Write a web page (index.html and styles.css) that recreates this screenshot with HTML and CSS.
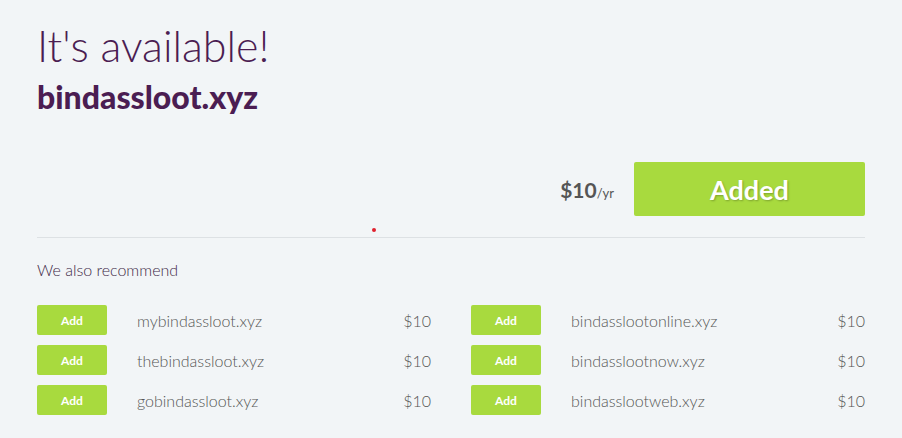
FILE: index.html
```html
<!DOCTYPE html>
<html>
<head>
    <title>Domain search</title>
    <link rel="stylesheet" href="styles.css">
</head>
<body>
    <div class="page">
        <h1 class="headline">It's available!</h1>
        <h2 class="domain">bindassloot.xyz</h2>

        <div class="buy-row">
            <span class="price">$10<small>/yr</small></span>
            <button class="btn-added">Added</button>
        </div>

        <div class="divider"><span class="dot"></span></div>

        <p class="rec-title">We also recommend</p>

        <div class="rec-grid">
            <div class="rec-item">
                <button class="btn-add">Add</button>
                <span class="rec-name">mybindassloot.xyz</span>
                <span class="rec-price">$10</span>
            </div>
            <div class="rec-item">
                <button class="btn-add">Add</button>
                <span class="rec-name">bindasslootonline.xyz</span>
                <span class="rec-price">$10</span>
            </div>
            <div class="rec-item">
                <button class="btn-add">Add</button>
                <span class="rec-name">thebindassloot.xyz</span>
                <span class="rec-price">$10</span>
            </div>
            <div class="rec-item">
                <button class="btn-add">Add</button>
                <span class="rec-name">bindasslootnow.xyz</span>
                <span class="rec-price">$10</span>
            </div>
            <div class="rec-item">
                <button class="btn-add">Add</button>
                <span class="rec-name">gobindassloot.xyz</span>
                <span class="rec-price">$10</span>
            </div>
            <div class="rec-item">
                <button class="btn-add">Add</button>
                <span class="rec-name">bindasslootweb.xyz</span>
                <span class="rec-price">$10</span>
            </div>
        </div>
    </div>
</body>
</html>
```

FILE: styles.css
```css
body {
    margin: 0;
    background: #f2f5f7;
    font-family: Lato, "Open Sans", sans-serif;
}
.page {
    width: 828px;
    padding: 20px 0 0 37px;
}
.headline {
    margin: 0;
    font-size: 43px;
    font-weight: 300;
    line-height: 52px;
    color: #4b1d52;
}
.domain {
    margin: 6px 0 0;
    font-size: 32px;
    font-weight: 900;
    line-height: 38px;
    color: #4b1d52;
}
.buy-row {
    display: flex;
    justify-content: flex-end;
    align-items: center;
    gap: 20px;
    margin-top: 46px;
}
.price {
    font-size: 21px;
    font-weight: 700;
    color: #555;
}
.price small {
    font-size: 13px;
    font-weight: 400;
}
.btn-added {
    width: 231px;
    height: 54px;
    border: none;
    border-radius: 2px;
    background: #a8da3e;
    color: #fff;
    font-family: Lato, sans-serif;
    font-size: 27px;
    font-weight: 700;
    text-shadow: 1px 1px 2px rgba(0,0,0,0.25);
}
.divider {
    position: relative;
    margin-top: 21px;
    height: 1px;
    background: #dde1e4;
}
.dot {
    position: absolute;
    left: 335px;
    top: -9px;
    width: 4px;
    height: 4px;
    border-radius: 50%;
    background: #e0202e;
}
.rec-title {
    margin: 22px 0 0;
    font-size: 16px;
    font-weight: 300;
    color: #3f2a47;
}
.rec-grid {
    display: grid;
    grid-template-columns: 394px 394px;
    column-gap: 40px;
    row-gap: 10px;
    margin-top: 26px;
}
.rec-item {
    display: flex;
    align-items: center;
    height: 30px;
}
.btn-add {
    width: 70px;
    height: 30px;
    border: none;
    border-radius: 2px;
    background: #a8da3e;
    color: #fff;
    font-family: Lato, sans-serif;
    font-size: 12px;
    font-weight: 700;
}
.rec-name {
    flex: 1;
    margin-left: 30px;
    font-size: 16px;
    font-weight: 300;
    color: #555;
}
.rec-price {
    font-size: 16px;
    font-weight: 300;
    color: #555;
}
```
